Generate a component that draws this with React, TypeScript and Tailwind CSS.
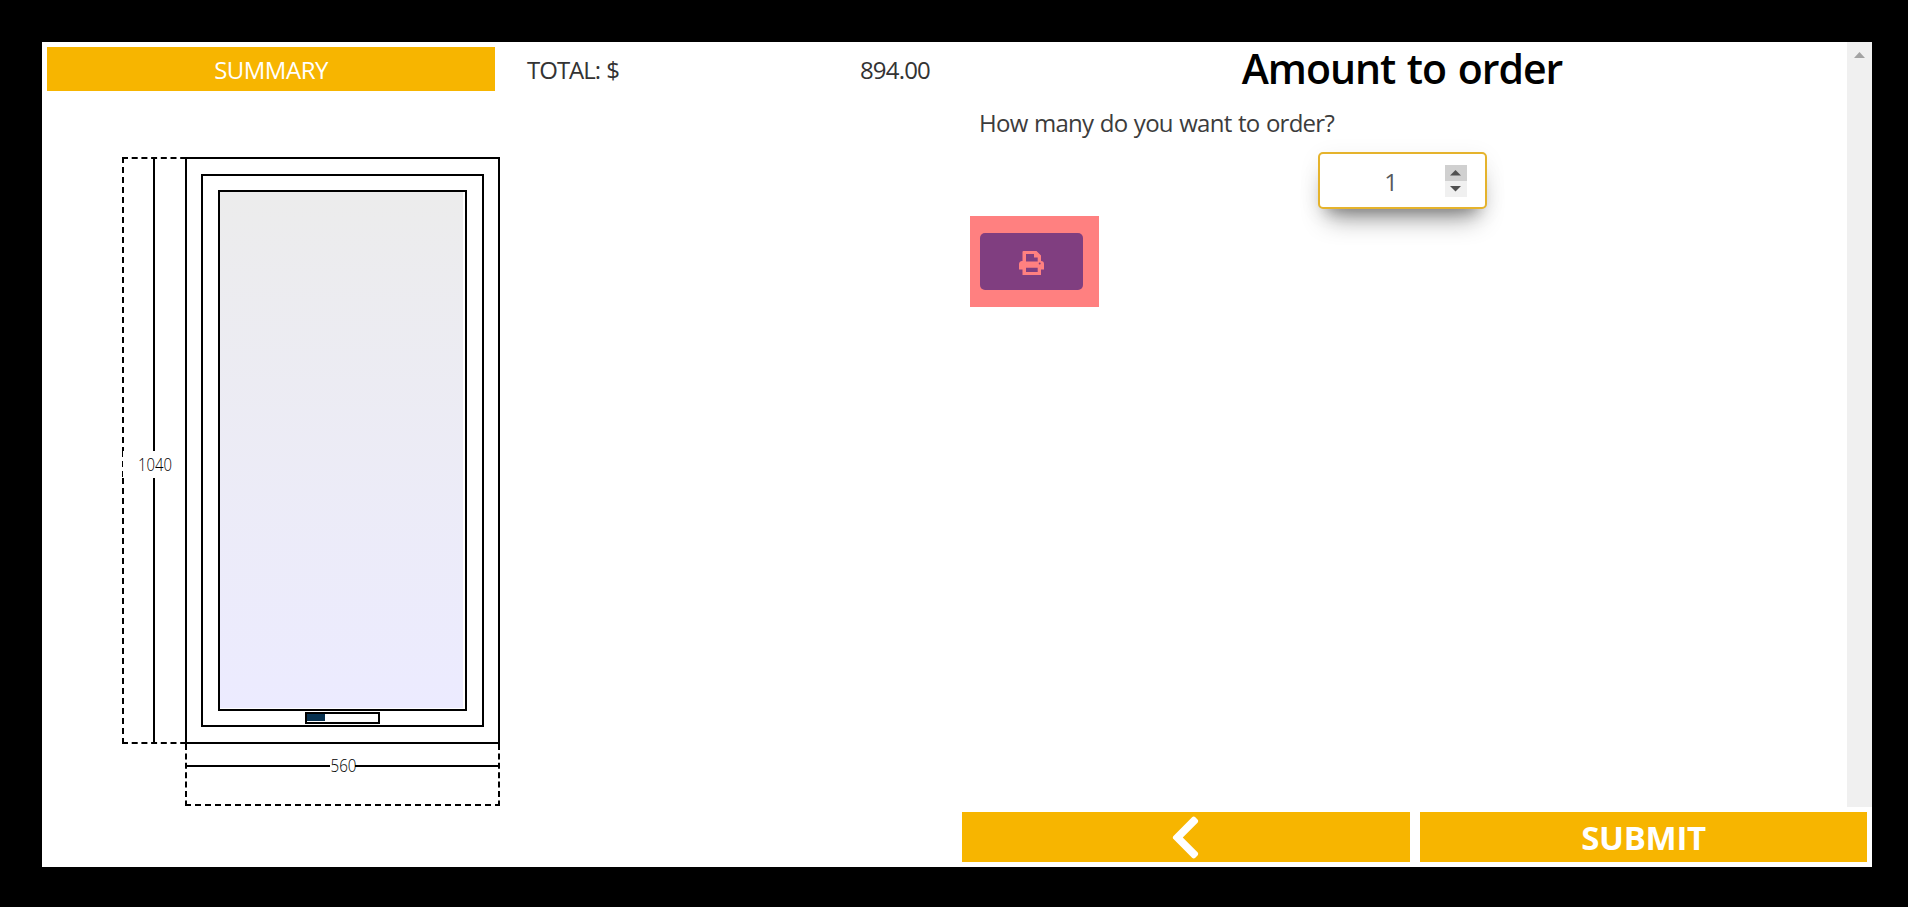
import { useState } from "react";

const font = "font-['Open_Sans','Noto_Sans',sans-serif]";

function PrintIcon() {
  return (
    <svg viewBox="0 0 25 24" className="h-6 w-[25px]" fill="currentColor" fillRule="evenodd" aria-hidden="true">
      <path d="M4.500 0H17.500L22 4.500V10A3 3 0 0 1 25 13V18.500H22V24H3.500V18.500H0V13A3 3 0 0 1 3.500 10V1A1 1 0 0 1 4.500 0ZM7 3V10.500H18.700V6.500H15V3ZM7 16.700V21H18.700V16.700ZM20.700 11.500A1 1 0 1 0 20.700 13.500A1 1 0 1 0 20.700 11.500Z" />
    </svg>
  );
}

function ChevronLeft() {
  return (
    <svg viewBox="0 0 320 512" className="mr-px h-[49px] w-[31px]" fill="currentColor" aria-hidden="true">
      <path d="M34.52 239.03L228.87 44.69c9.37-9.37 24.57-9.37 33.94 0l22.67 22.67c9.36 9.36 9.37 24.52.04 33.9L131.49 256l154.02 154.75c9.34 9.38 9.32 24.54-.04 33.9l-22.67 22.67c-9.37 9.37-24.57 9.37-33.94 0L34.52 272.97c-9.37-9.37-9.37-24.57 0-33.94z" />
    </svg>
  );
}

function WindowDrawing() {
  return (
    <svg
      width="400"
      height="670"
      viewBox="112 147 400 670"
      className="ml-[70px] mt-14 block shrink-0"
      fill="none"
      stroke="#000"
      strokeWidth="2"
    >
      <defs>
        <linearGradient id="glass" x1="0" y1="0" x2="0" y2="1">
          <stop offset="0" stopColor="#ececec" />
          <stop offset="1" stopColor="#ecebff" />
        </linearGradient>
      </defs>

      {/* height dimension */}
      <path d="M123 157V451M123 478V744" strokeDasharray="6 4" />
      <path d="M122.5 451V478" strokeDasharray="6 4" strokeWidth="1" />
      <path d="M122 158H186M122 743H186" strokeDasharray="6 3.7" />
      <path d="M154 158V451M154 478V743" />
      <text x="138" y="471" textLength="34" lengthAdjust="spacingAndGlyphs" className="text-[18px] font-light" fill="#000" stroke="none">
        1040
      </text>

      {/* frame, sash and glass */}
      <rect x="186" y="158" width="313" height="585" />
      <rect x="202" y="175" width="281" height="551" />
      <rect x="220" y="192" width="243" height="516" fill="url(#glass)" stroke="none" />
      <rect x="219" y="191" width="247" height="519" />

      {/* handle */}
      <rect x="307" y="713" width="18" height="8" fill="#06304f" stroke="none" />
      <rect x="306" y="713" width="73" height="10" />

      {/* width dimension */}
      <path d="M186 744V806M499 744V806" strokeDasharray="6 3.4" />
      <path d="M185 805H500" strokeDasharray="6 4" />
      <path d="M186 766H330M355 766H499" />
      <text x="330.5" y="772" textLength="26" lengthAdjust="spacingAndGlyphs" className="text-[18px] font-light" fill="#000" stroke="none">
        560
      </text>
    </svg>
  );
}

function AmountInput() {
  const [amount, setAmount] = useState(1);
  return (
    <div className="flex h-[57px] w-[169px] items-center rounded-[5px] border-2 border-[#e5b32c] bg-white pr-[18px] shadow-[0_18px_26px_-10px_rgba(0,0,0,0.42),0_4px_23px_0_rgba(0,0,0,0.06),0_12px_12px_-9px_rgba(0,0,0,0.2)]">
      <span className="flex-1 pl-[18px] pt-[2px] text-center text-2xl leading-none text-[#55595c]">{amount}</span>
      <div className="flex w-[22px] flex-col">
        <button
          aria-label="Increase"
          onClick={() => setAmount(amount + 1)}
          className="flex h-4 items-center justify-center bg-[#d0d0d0]"
        >
          <svg width="11" height="6" viewBox="0 0 11 6" fill="#505050">
            <path d="M0 5.500L5.500 0L11 5.500Z" />
          </svg>
        </button>
        <button
          aria-label="Decrease"
          onClick={() => setAmount(Math.max(1, amount - 1))}
          className="flex h-4 items-center justify-center bg-[#f0f0f0]"
        >
          <svg width="11" height="6" viewBox="0 0 11 6" fill="#505050">
            <path d="M0 0H11L5.500 5.500Z" />
          </svg>
        </button>
      </div>
    </div>
  );
}

export default function App() {
  return (
    <div className={`h-[907px] w-[1908px] overflow-hidden bg-black px-9 pb-10 pt-[42px] pl-[42px] ${font}`}>
      <main className="flex h-[825px] w-[1830px] bg-white">
        <section className="flex w-[915px] flex-col">
          <div className="flex items-center pl-[5px] pt-[5px] text-2xl leading-none text-[#2b2b2b]">
            <button className="flex h-11 w-[448px] items-center justify-center bg-[#f7b500] pt-px text-white">
              <span className="tracking-[-0.5px]">SUMMARY</span>
            </button>
            <div className="flex flex-1 justify-between pl-8 pr-[27px] pt-px text-[#333]">
              <span className="tracking-[-1px] [word-spacing:1px]">TOTAL: $</span>
              <span className="tracking-[-0.8px]">894.00</span>
            </div>
          </div>
          <WindowDrawing />
        </section>

        <section className="flex w-[915px] flex-col">
          <div className="flex h-[765px]">
            <div className="flex flex-1 flex-col">
              <h1 className="flex h-[54px] items-center justify-center pb-[2px] text-[41px] font-semibold leading-none tracking-[-1px] text-black [word-spacing:2px]">
                Amount to order
              </h1>
              <p className="flex h-14 items-center pb-[2px] pl-[22px] text-2xl leading-none tracking-[-0.75px] text-[#3c3c3c] [word-spacing:1px]">
                How many do you want to order?
              </p>
              <div className="flex justify-center">
                <AmountInput />
              </div>
              <div className="ml-[13px] mt-[7px] flex h-[91px] w-[129px] items-center bg-[#ff8080] pl-[10px]">
                <button
                  aria-label="Print"
                  className="flex h-[57px] w-[103px] items-center justify-center rounded-[5px] bg-[#803e80] pt-[2px] text-[#ff8080]"
                >
                  <PrintIcon />
                </button>
              </div>
            </div>
            <div className="flex w-[25px] justify-center bg-[#f0f0f0] pt-[10px]">
              <svg width="11" height="6" viewBox="0 0 11 6" fill="#a3a3a3">
                <path d="M0 6L5.500 0L11 6Z" />
              </svg>
            </div>
          </div>
          <div className="flex gap-[10px] p-[5px] text-white">
            <button aria-label="Back" className="flex h-[50px] w-[448px] items-center justify-center bg-[#f7b500]">
              <ChevronLeft />
            </button>
            <button className="flex h-[50px] w-[447px] items-center justify-center bg-[#f7b500] pt-px text-[33px] font-bold leading-none tracking-[-0.3px]">
              SUBMIT
            </button>
          </div>
        </section>
      </main>
    </div>
  );
}
